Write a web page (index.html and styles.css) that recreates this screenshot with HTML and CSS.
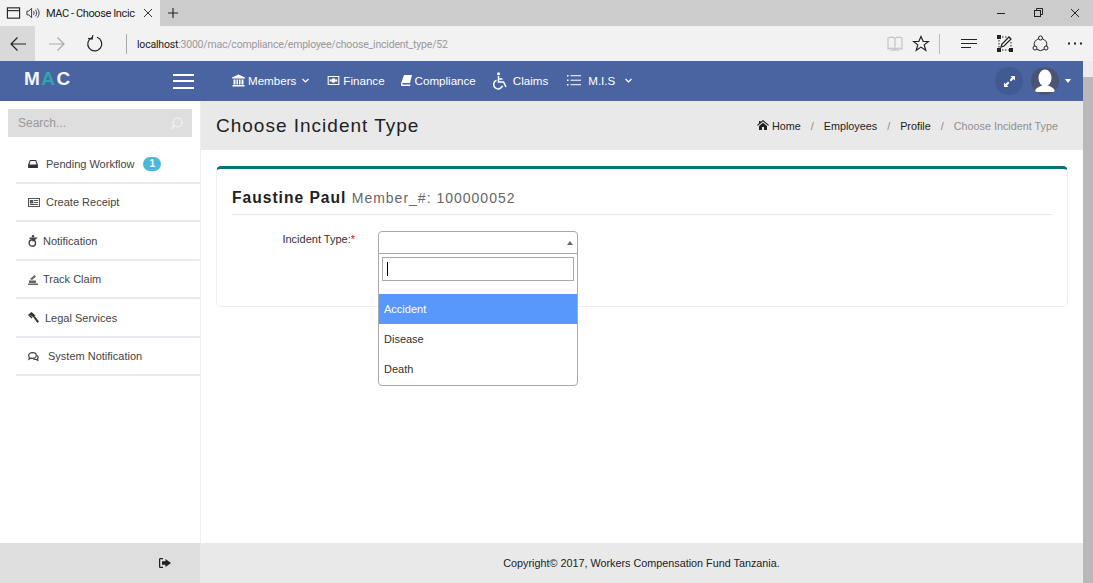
FILE: index.html
```html
<!DOCTYPE html>
<html lang="en">
<head>
    <meta charset="UTF-8">
    <meta name="viewport" content="width=device-width, initial-scale=1.0">
    <title>MAC - Choose Incident Type</title>
    <link rel="stylesheet" href="styles.css">
</head>
<body>
    <!-- browser tab strip -->
    <div class="tabstrip">
        <div class="tab">
            <svg class="tab-icon" width="15" height="14" viewBox="0 0 16 14"><rect x="1.5" y="1.5" width="13" height="11" fill="none" stroke="#222" stroke-width="1.2"/><path d="M1.5 4.5h13" stroke="#222" stroke-width="1.2"/></svg>
            <svg class="tab-icon" width="14" height="14" viewBox="0 0 15 14" fill="none" stroke="#333"><path d="M1 5h2l3-3v10l-3-3H1z"/><path d="M8 5c1 1 1 3 0 4M10 3.5c2 2 2 5 0 7M12 2c2.7 3 2.7 7 0 10"/></svg>
            <span class="tab-title">MAC - Choose Incic</span>
            <svg class="tab-close" width="10" height="10" viewBox="0 0 10 10"><path d="M1 1l8 8M9 1l-8 8" stroke="#333"/></svg>
        </div>
        <svg class="tab-new" width="12" height="12" viewBox="0 0 12 12"><path d="M6 1v10M1 6h10" stroke="#222" stroke-width="1.1"/></svg>
        <div class="window-btns">
            <svg width="10" height="10" viewBox="0 0 10 10"><path d="M1 5.500h8" stroke="#222"/></svg>
            <svg width="10" height="10" viewBox="0 0 10 10" fill="none" stroke="#222"><rect x="1.500" y="2.500" width="6" height="6"/><path d="M3.500 2.500v-2h6v6h-2"/></svg>
            <svg width="10" height="10" viewBox="0 0 10 10"><path d="M1 1l8 8M9 1l-8 8" stroke="#222"/></svg>
        </div>
    </div>

    <!-- browser toolbar -->
    <div class="toolbar">
        <div class="tool-btn tool-back">
            <svg width="18" height="16" viewBox="0 0 18 16" fill="none" stroke="#222" stroke-width="1.2"><path d="M17 8H2M8.500 1.500L2 8l6.500 6.500"/></svg>
        </div>
        <div class="tool-btn">
            <svg width="18" height="16" viewBox="0 0 18 16" fill="none" stroke="#aaa" stroke-width="1.2"><path d="M1 8h15M9.500 1.500L16 8l-6.500 6.500"/></svg>
        </div>
        <div class="tool-btn">
            <svg width="18" height="18" viewBox="0 0 18 18" fill="none" stroke="#222" stroke-width="1.2"><path d="M6 2.500A7 7 0 1 0 11 2.300"/><path d="M6.500 0v4h-4" transform="rotate(10 6 2)"/></svg>
        </div>
        <div class="url-divider"></div>
        <div class="url"><span class="url-host">localhost</span>:3000/mac/compliance/employee/choose_incident_type/52</div>
        <div class="tool-icons">
            <svg class="ic-book" width="16" height="15" viewBox="0 0 16 15" fill="none" stroke="#c4c4c4" stroke-width="1.2"><path d="M1 2c2-1 5-1 7 .5C10 1 13 1 15 2v11c-2-1-5-1-7 .5C6 12 3 12 1 13zM8 2.500v11"/><path d="M3 14h10"/></svg>
            <svg class="ic-star" width="18" height="17" viewBox="0 0 18 17" fill="none" stroke="#222" stroke-width="1.2"><path d="M9 1.500l2.200 5h5.300l-4.300 3.400 1.600 5.400L9 12.100l-4.800 3.200 1.600-5.400L1.500 6.500h5.300z"/></svg>
            <div class="tool-divider"></div>
            <svg class="ic-hub" width="17" height="12" viewBox="0 0 17 12" stroke="#222" stroke-width="1.2"><path d="M0 1.500h16M0 5.500h16M0 9.500h10"/></svg>
            <svg class="ic-note" width="16" height="17" viewBox="0 0 16 17" fill="none" stroke="#222"><path d="M2 2h8M2 15h12M2 2v13M14 7v8" stroke-dasharray="1.500 1.500"/><rect x="0.500" y="0.500" width="3" height="3" fill="#222"/><rect x="0.500" y="13.500" width="3" height="3" fill="#222"/><rect x="12.500" y="13.500" width="3" height="3" fill="#222"/><path d="M4 12l1-3 7-7 2 2-7 7z" fill="#fff" stroke-width="1.3"/></svg>
            <svg class="ic-share" width="17" height="17" viewBox="0 0 17 17" fill="none" stroke="#222"><circle cx="8.500" cy="3" r="2"/><circle cx="3" cy="13" r="2"/><circle cx="14" cy="13" r="2"/><path d="M6.700 3.800A6.500 6.500 0 0 0 2.300 11M10.300 3.800A6.500 6.500 0 0 1 14.700 11M5 14.500a6.500 6.500 0 0 0 7 0"/></svg>
            <svg class="ic-more" width="15" height="3" viewBox="0 0 15 3" fill="#222"><rect y="0.500" width="2" height="2"/><rect x="6" y="0.500" width="2" height="2"/><rect x="12" y="0.500" width="2" height="2"/></svg>
        </div>
    </div>

    <div class="viewport">
        <div class="app">
            <nav class="navbar">
                <div class="logo">M<span class="logo-a">A</span>C</div>
                <div class="burger"><span></span><span></span><span></span></div>
                <ul class="menu">
                    <li class="menu-members">
                        <svg width="13" height="13" viewBox="0 0 13 13" fill="#fff"><path d="M6.500 0.500L13 3.500v1H0v-1zM1.500 5.500h2v5h-2zM4.500 5.500h1.500v5H4.500zM7 5.500h1.500v5H7zM9.500 5.500h2v5h-2zM.5 11h12v1.500H.5z"/></svg>
                        Members
                        <svg class="chev" width="7" height="5" viewBox="0 0 7 5" fill="none" stroke="#fff" stroke-width="1.2"><path d="M.5 1L3.500 4l3-3"/></svg>
                    </li>
                    <li class="menu-finance">
                        <svg width="13" height="9" viewBox="0 0 13 10" fill="#fff"><path d="M0 0h13v10H0zM1.200 1.200v7.600h10.600V1.200z"/><circle cx="6.500" cy="5" r="2.600"/><rect x="2.300" y="3.800" width="1.400" height="2.400"/><rect x="9.300" y="3.800" width="1.400" height="2.400"/></svg>
                        Finance
                    </li>
                    <li class="menu-compliance">
                        <svg width="11" height="11" viewBox="0 0 11 11" fill="#fff"><path d="M3 0h8L9 8H1.800C1 8 1 9.600 1.800 9.600H9.500L9 11H1.500C0 11-.3 9.500.2 8z"/></svg>
                        Compliance
                    </li>
                    <li class="menu-claims">
                        <svg width="16" height="18" viewBox="0 0 16 18" fill="none" stroke="#fff" stroke-width="1.5"><circle cx="6.500" cy="1.800" r="1.500" fill="#fff" stroke="none"/><path d="M6.500 4v6h5l2.500 5"/><path d="M6.500 7h4"/><path d="M4.500 8.300a4.500 4.500 0 1 0 6 5.500"/></svg>
                        Claims
                    </li>
                    <li class="menu-mis">
                        <svg width="14" height="11" viewBox="0 0 14 11" fill="#fff"><rect y="0" width="1.500" height="1.500"/><rect y="4.500" width="1.500" height="1.500"/><rect y="9" width="1.500" height="1.500"/><rect x="3.500" y="0.200" width="10.500" height="1"/><rect x="3.500" y="4.700" width="10.500" height="1"/><rect x="3.500" y="9.200" width="10.500" height="1"/></svg>
                        <span class="mis-label">M.I.S</span>
                        <svg class="chev" width="7" height="5" viewBox="0 0 7 5" fill="none" stroke="#fff" stroke-width="1.2"><path d="M.5 1L3.500 4l3-3"/></svg>
                    </li>
                </ul>
                <div class="nav-right">
                    <div class="round-btn">
                        <svg width="11" height="11" viewBox="0 0 11 11" fill="#fff"><path d="M6.500 0H11v4.500L9.400 3 7 5.400 5.600 4 8 1.600zM0 6.500L1.600 8 4 5.600 5.400 7 3 9.400 4.500 11H0z"/></svg>
                    </div>
                    <div class="avatar">
                        <svg width="28" height="28" viewBox="0 0 28 28" fill="#fff"><ellipse cx="14" cy="11" rx="6.500" ry="8.500"/><path d="M4 25c0-4 4-5 7-6.500h6c3 1.500 7 2.500 7 6.500z"/></svg>
                    </div>
                    <div class="caret"></div>
                </div>
            </nav>

            <div class="body-row">
                <aside class="sidebar">
                    <div class="search">
                        <span>Search...</span>
                        <svg width="13" height="13" viewBox="0 0 13 13" fill="none" stroke="#f5f5f5" stroke-width="1.1"><circle cx="7.500" cy="5.500" r="4.500"/><path d="M4.300 8.700L.8 12.200"/></svg>
                    </div>
                    <ul class="side-menu">
                        <li>
                            <svg class="side-icon icon-inbox" width="10" height="8" viewBox="0 0 11 9" fill="#333"><path d="M2 0h7l2 5v4H0V5zM2.800 1.200L1.500 5h8L8.200 1.200z"/></svg>
                            <span class="gap-m">Pending Workflow</span>
                            <span class="badge">1</span>
                        </li>
                        <li>
                            <svg class="side-icon" width="12" height="9" viewBox="0 0 12 9" fill="#555"><path d="M0 0h12v9H0zM1 1v7h10V1z"/><rect x="1.800" y="2" width="3.500" height="3.500"/><rect x="6" y="2" width="4.200" height="1"/><rect x="6" y="4" width="4.200" height="1"/><rect x="1.800" y="6" width="8.400" height="1"/></svg>
                            <span class="gap-m">Create Receipt</span>
                        </li>
                        <li>
                            <svg class="side-icon" width="10" height="12" viewBox="0 0 10 12" fill="none" stroke="#444" stroke-width="1.400"><circle cx="5" cy="1.200" r="1.200" fill="#444" stroke="none"/><path d="M1.500 3.200h6.500L5.500 5.500"/><path d="M5 4v2.500"/><circle cx="4.300" cy="8" r="3.200"/></svg>
                            <span class="gap-s">Notification</span>
                        </li>
                        <li>
                            <svg class="side-icon" width="10" height="11" viewBox="0 0 10 11" fill="#666"><path d="M0 9.500h10V11H0zM1 6.500h7v2.500H1zM2 5l4.500-4L8 2.500 4 6z"/></svg>
                            <span class="gap-s">Track Claim</span>
                        </li>
                        <li>
                            <svg class="side-icon" width="11" height="11" viewBox="0 0 11 11" fill="#333"><path d="M3.500 0L7.500 3.500 5.500 5.500 1 2zM5.500 5.500l1.500-1L11 9.500 9.500 11zM0 3l1-1 3.500 3.500-1 1z"/></svg>
                            <span class="gap-t">Legal Services</span>
                        </li>
                        <li>
                            <svg class="side-icon" width="11" height="9" viewBox="0 0 11 9" fill="none" stroke="#444" stroke-width="1.200"><path d="M4.500.7c2.200 0 3.800 1.200 3.800 2.800S6.700 6.300 4.500 6.300c-.5 0-1 0-1.500-.2L1 7.300l.5-1.800C.9 5 .7 4.300.7 3.500.7 1.900 2.300.7 4.500.7z"/><path d="M9 3.500c1.300.8 1.500 2.300.5 3.300l.4 1.500-1.800-.9c-1 .2-2 0-2.600-.4"/></svg>
                            <span class="gap-l">System Notification</span>
                        </li>
                    </ul>
                </aside>

                <main class="content">
                    <header class="page-head">
                        <h1>Choose Incident Type</h1>
                        <ol class="crumbs">
                            <li>
                                <svg width="12" height="10" viewBox="0 0 12 10" fill="#222"><path d="M6 0l6 5-.7.8L6 1.500.7 5.800 0 5l2-1.700V1h1.500v1z"/><path d="M2 6l4-3.300L10 6v4H7V7H5v3H2z"/></svg>
                                Home
                            </li>
                            <li>Employees</li>
                            <li>Profile</li>
                            <li class="crumb-active">Choose Incident Type</li>
                        </ol>
                    </header>

                    <section class="card">
                        <h2 class="card-title">Faustine Paul <small>Member_#: 100000052</small></h2>
                        <div class="form-row">
                            <label class="form-label">Incident Type:<span class="req">*</span></label>
                            <div class="select">
                                <div class="select-box"><i class="select-arrow"></i></div>
                                <div class="select-drop">
                                    <div class="select-search"><i class="text-cursor"></i></div>
                                    <ul class="select-options">
                                        <li class="opt-active">Accident</li>
                                        <li>Disease</li>
                                        <li>Death</li>
                                    </ul>
                                </div>
                            </div>
                        </div>
                    </section>
                </main>
            </div>

            <footer class="footer">
                <div class="footer-left">
                    <svg width="12" height="10" viewBox="0 0 12 10" fill="#222"><path d="M4 0H1.500C.5 0 0 .5 0 1.500v7C0 9.500.5 10 1.500 10H4V8.800H1.200V1.200H4z"/><path d="M6.500 1L12 5 6.500 9V6.800H3V3.200h3.500z"/></svg>
                </div>
                <div class="footer-text">Copyright© 2017, Workers Compensation Fund Tanzania.</div>
            </footer>
        </div>
        <div class="scrollbar"><div class="scroll-up"></div></div>
    </div>
</body>
</html>
```

FILE: styles.css
```css
* {
  box-sizing: border-box;
}

html, body {
  height: 100%;
}

body {
  margin: 0;
  height: 583px;
  overflow: hidden;
  display: flex;
  flex-direction: column;
  font-family: "Liberation Sans", Arial, sans-serif;
  font-size: 12px;
  color: #333;
  background: #fff;
}

ul, ol {
  list-style: none;
  margin: 0;
  padding: 0;
}

/* Browser tabs */
.tabstrip {
  height: 26px;
  display: flex;
  align-items: center;
  background: #cccccc;
}

.tab {
  width: 160px;
  height: 26px;
  display: flex;
  align-items: center;
  padding-left: 6px;
  background: #f2f2f2;
  font-family: Roboto, sans-serif;
  font-size: 11px;
  letter-spacing: -.4px;
  color: #222;
}

.tab-icon {
  margin-right: 5px;
}

.tab-title {
  width: 89px;
  margin-left: 1px;
  white-space: nowrap;
}

.tab-close {
  margin-left: 8px;
}

.tab-new {
  margin-left: 7px;
}

.window-btns {
  margin-left: auto;
  margin-right: 13px;
  display: flex;
  gap: 27px;
}

/* Browser toolbar */
.toolbar {
  height: 35px;
  display: flex;
  align-items: center;
  background: #f2f2f2;
}

.tool-btn {
  width: 35px;
  height: 35px;
  margin-right: 3px;
  display: flex;
  align-items: center;
  justify-content: center;
}

.tool-back {
  background: #d9d9d9;
  margin-right: 4px;
}

.url-divider {
  width: 1px;
  height: 20px;
  margin-left: 11px;
  background: #aaa;
}

.url {
  margin-left: 10px;
  padding-top: 1px;
  font-family: Roboto, sans-serif;
  font-size: 10.500px;
  letter-spacing: -.2px;
  color: #999;
}

.url-host {
  color: #222;
}

.tool-icons {
  margin-left: auto;
  margin-right: 10px;
  display: flex;
  align-items: center;
}

.tool-icons svg {
  margin-left: 9px;
}

.tool-divider {
  width: 1px;
  height: 20px;
  margin-left: 9px;
  background: #bbb;
}

.tool-icons .ic-hub {
  margin-left: 21px;
}

.tool-icons .ic-note {
  margin-left: 19px;
}

.tool-icons .ic-share {
  margin-left: 19px;
}

.tool-icons .ic-more {
  margin-left: 19px;
}

/* The page inside the browser */
.viewport {
  flex: 1;
  display: flex;
  min-height: 0;
}

.app {
  flex: 1;
  display: flex;
  flex-direction: column;
  min-width: 0;
}

.scrollbar {
  width: 10px;
  background: #b9b9b9;
}

.scroll-up {
  height: 16px;
  background: #ececec;
}

/* Navbar */
.navbar {
  height: 40px;
  display: flex;
  align-items: center;
  background: #4a64a1;
  color: #fff;
}

.logo {
  width: 173px;
  padding: 0 0 4px 24px;
  font-size: 19px;
  font-weight: bold;
  letter-spacing: 1.500px;
  color: #f2f6fb;
}

.logo-a {
  color: #2fa5ad;
}

.burger {
  width: 21px;
  height: 15px;
  display: flex;
  flex-direction: column;
  justify-content: space-between;
}

.burger span {
  height: 2px;
  background: #fff;
}

.menu {
  display: flex;
  align-items: center;
  margin-left: 38px;
  padding-bottom: 1px;
  font-size: 11.600px;
}

.menu li {
  display: flex;
  align-items: center;
  gap: 3px;
}

.menu .chev {
  margin-left: 3px;
}

.menu-finance {
  margin-left: 18px;
}

.menu-compliance {
  margin-left: 16px;
}

.menu-claims {
  margin-left: 16px;
}

.menu li.menu-claims {
  gap: 5px;
}

.menu-mis {
  margin-left: 19px;
}

.mis-label {
  margin-left: 4px;
  margin-right: 4px;
}

.nav-right {
  margin-left: auto;
  display: flex;
  align-items: center;
  padding-right: 12px;
}

.round-btn,
.avatar {
  width: 28px;
  height: 28px;
  border-radius: 50%;
  display: flex;
  align-items: center;
  justify-content: center;
  overflow: hidden;
}

.round-btn {
  background: #415a93;
}

.avatar {
  margin-left: 8px;
  background: #4a5670;
}

.caret {
  margin-left: 6px;
  border-left: 3.500px solid transparent;
  border-right: 3.500px solid transparent;
  border-top: 4px solid #fff;
}

/* Sidebar and content */
.body-row {
  flex: 1;
  display: flex;
  min-height: 0;
}

.sidebar {
  width: 201px;
  padding-top: 8px;
  border-right: 1px solid #eee;
}

.search {
  height: 28px;
  margin: 0 8px;
  padding: 0 9px 0 10px;
  display: flex;
  align-items: center;
  justify-content: space-between;
  background: #dedede;
  color: #999;
}

.side-menu {
  margin-left: 16px;
  padding-top: 8.250px;
}

.side-menu li {
  height: 38.500px;
  display: flex;
  align-items: center;
  padding-left: 12px;
  border-bottom: 2px solid #e8e8ee;
  font-size: 11px;
  color: #444;
}

.side-icon {
  flex: none;
}

.gap-m {
  margin-left: 6px;
}

.icon-inbox + .gap-m {
  margin-left: 8px;
}

.gap-s {
  margin-left: 5px;
}

.gap-t {
  margin-left: 6px;
}

.gap-l {
  margin-left: 9px;
}

.badge {
  margin-left: 9px;
  padding: 1px 6px;
  border-radius: 8px;
  background: #4cb7d9;
  color: #fff;
  font-weight: bold;
  font-size: 10px;
  line-height: 12px;
}

.content {
  flex: 1;
  min-width: 0;
}

.page-head {
  height: 49px;
  padding: 0 25px 0 15px;
  display: flex;
  align-items: center;
  justify-content: space-between;
  background: #e9e9e9;
}

.page-head h1 {
  margin: 0;
  font-size: 19px;
  font-weight: normal;
  letter-spacing: 1px;
  color: #222;
}

.crumbs {
  display: flex;
  font-size: 10.800px;
  color: #222;
}

.crumbs li + li::before {
  content: "/";
  margin: 0 10px;
  color: #888;
}

.crumb-active {
  color: #8f8f8f;
}

.card {
  height: 141px;
  margin: 16px 15px 0;
  padding: 0 15px;
  border: 1px solid #eee;
  border-top: 3px solid #04727c;
  border-radius: 5px;
}

.card-title {
  height: 46px;
  margin: 0;
  padding-top: 19px;
  font-size: 15.600px;
  line-height: 20px;
  letter-spacing: 1px;
  color: #222;
  border-bottom: 1px solid #e8e8e8;
}

.card-title small {
  font-size: 14px;
  font-weight: normal;
  letter-spacing: 1px;
  color: #666;
}

.form-row {
  display: flex;
  margin-top: 16px;
}

.form-label {
  width: 123px;
  padding-top: 2px;
  text-align: right;
  font-size: 11px;
  color: #333;
}

.req {
  color: #e00;
}

.select {
  position: relative;
  width: 200px;
  margin-left: 23px;
}

.select-box {
  height: 23px;
  border: 1px solid #aaa;
  border-radius: 4px 4px 0 0;
  background: #fff;
  position: relative;
}

.select-arrow {
  position: absolute;
  right: 4px;
  top: 9px;
  border-left: 3.500px solid transparent;
  border-right: 3.500px solid transparent;
  border-bottom: 4px solid #666;
}

.select-drop {
  position: absolute;
  left: 0;
  right: 0;
  top: 22px;
  padding: 3px 0 1px;
  border: 1px solid #aaa;
  border-radius: 0 0 4px 4px;
  background: #fff;
  z-index: 5;
}

.select-search {
  height: 24px;
  margin: 0 3px;
  padding: 4px 4px;
  border: 1px solid #aaa;
}

.text-cursor {
  display: block;
  width: 1px;
  height: 14px;
  background: #000;
}

.select-options {
  margin-top: 13px;
  font-size: 11px;
}

.select-options li {
  height: 30px;
  padding-left: 5px;
  display: flex;
  align-items: center;
  color: #333;
}

.select-options .opt-active {
  background: #5897fb;
  color: #fff;
}

/* Footer */
.footer {
  height: 40px;
  display: flex;
  align-items: center;
  background: #e9e9e9;
}

.footer-left {
  width: 200px;
  height: 100%;
  padding-left: 159px;
  display: flex;
  align-items: center;
  background: #dedede;
}

.footer-text {
  flex: 1;
  text-align: center;
  font-size: 10.800px;
  color: #222;
}
```
